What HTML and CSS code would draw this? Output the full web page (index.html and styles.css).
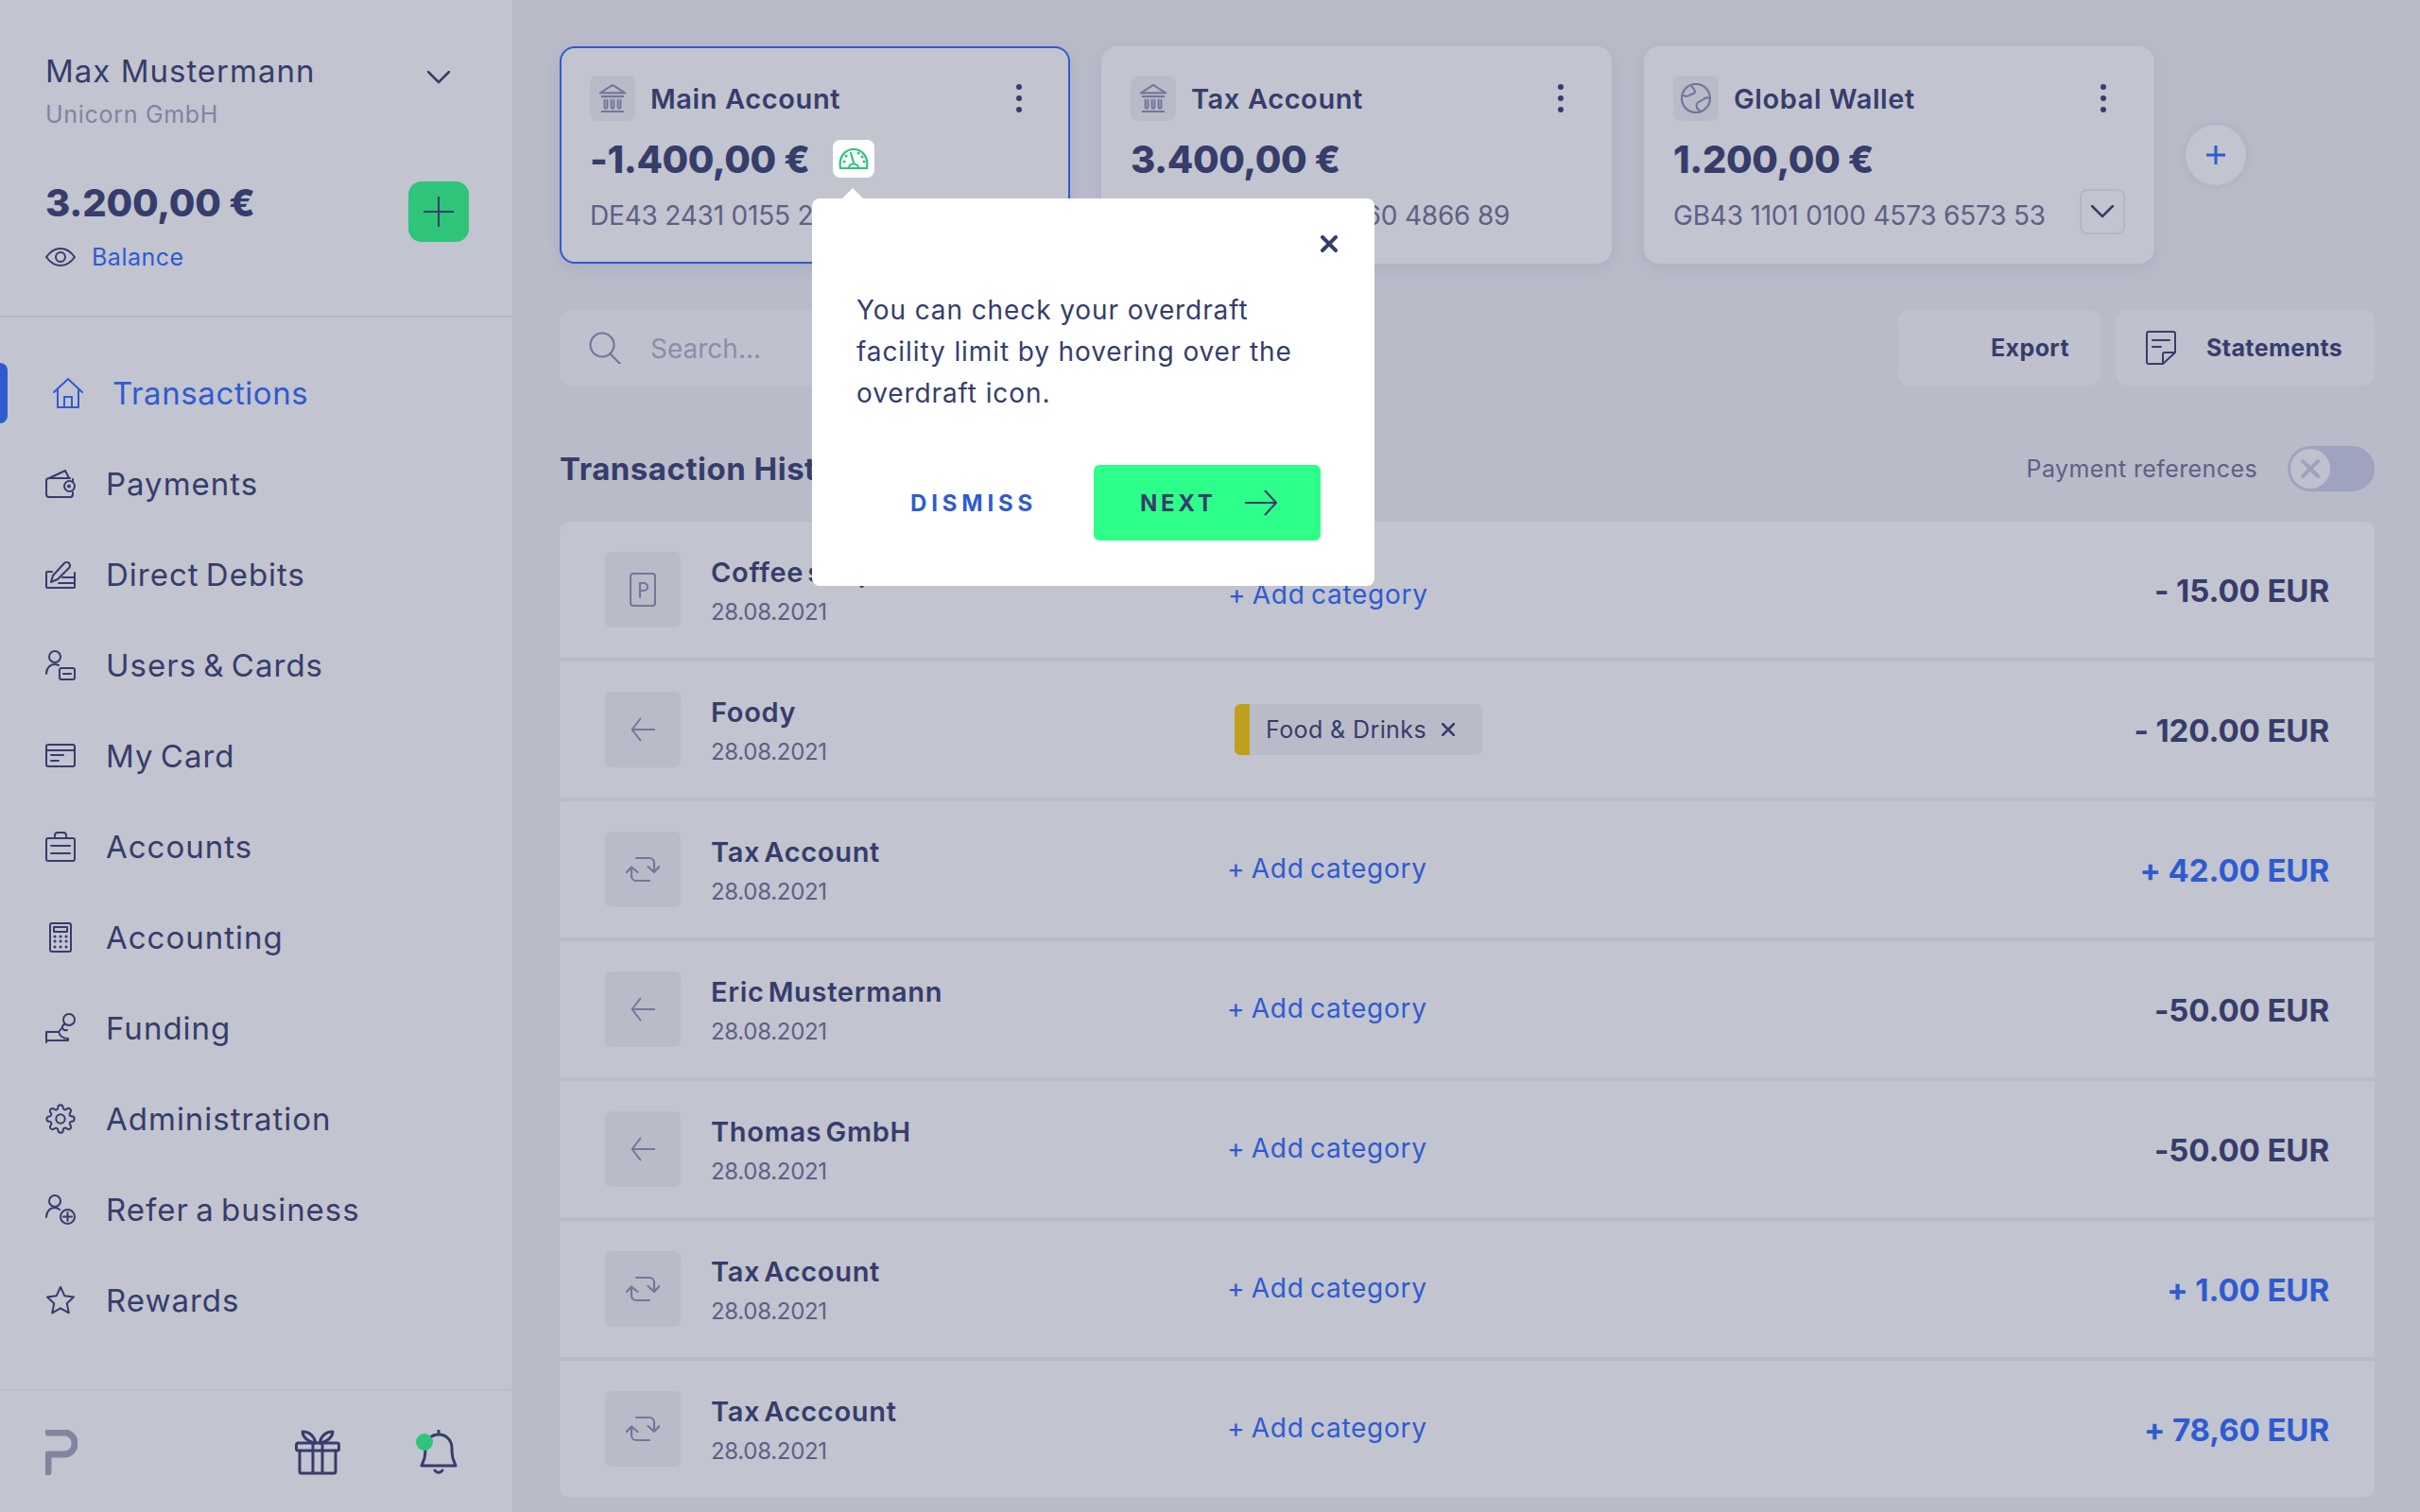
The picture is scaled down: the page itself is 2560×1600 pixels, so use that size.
FILE: index.html
```html
<!DOCTYPE html>
<html lang="en">
<head>
    <meta charset="UTF-8">
    <title>Transactions</title>
    <link rel="stylesheet" href="styles.css">
</head>
<body>
<svg class="sprite" xmlns="http://www.w3.org/2000/svg">
    <symbol id="i-bank" viewBox="0 0 32 32">
        <path d="M2 10 16 1l14 9zM4 14h24M4 31h24" />
        <path d="M7 18v8a1.500 1.500 0 0 0 3 0v-8M14.500 18v8a1.500 1.500 0 0 0 3 0v-8M22 18v8a1.500 1.500 0 0 0 3 0v-8" />
    </symbol>
    <symbol id="i-dots" viewBox="0 0 8 32">
        <circle cx="4" cy="4" r="3" fill="currentColor" stroke="none" />
        <circle cx="4" cy="16" r="3" fill="currentColor" stroke="none" />
        <circle cx="4" cy="28" r="3" fill="currentColor" stroke="none" />
    </symbol>
    <symbol id="i-back" viewBox="0 0 32 32">
        <path d="M30 16H3M13 3 3 16l10 13" />
    </symbol>
    <symbol id="i-swap" viewBox="0 0 36 28">
        <path d="M11 2h14a5 5 0 0 1 5 5v10M23.500 11l6.500 6 5.500-6M25 26H11a5 5 0 0 1-5-5V11.500M.8 17 6 11.500 12.500 17" />
    </symbol>
</svg>

<div class="app">
    <aside class="sidebar">
        <div class="profile">
            <div class="profile-top">
                <div>
                    <div class="user-name">Max Mustermann</div>
                    <div class="company">Unicorn GmbH</div>
                </div>
                <svg class="chevron" viewBox="0 0 24 14" width="24" height="14"><path d="M1 1l11 11L23 1" /></svg>
            </div>
            <div class="profile-balance">
                <div>
                    <div class="balance-amount">3.200,00 €</div>
                    <div class="balance-link">
                        <svg class="line-icon" viewBox="0 0 32 20" width="32" height="20">
                            <path d="M1 10C6 3 11 1 16 1s10 2 15 9c-5 7-10 9-15 9S6 17 1 10z" />
                            <circle cx="16" cy="10" r="5" />
                        </svg>
                        <span>Balance</span>
                    </div>
                </div>
                <div class="add-money">
                    <svg class="line-icon" viewBox="0 0 32 32" width="32" height="32"><path d="M16 0v32M0 16h32" /></svg>
                </div>
            </div>
        </div>

        <nav class="nav">
            <a class="nav-item active">
                <svg class="line-icon" viewBox="0 0 32 32" width="32" height="32">
                    <path d="M1 15 16 1l15 14M5 12v19h22V12M12 31V20h8v11" />
                </svg>
                <span>Transactions</span>
            </a>
            <a class="nav-item">
                <svg class="line-icon" viewBox="0 0 32 32" width="32" height="32">
                    <path d="M29 11V13M29 25v2a3 3 0 0 1-3 3H4a3 3 0 0 1-3-3V13a3 3 0 0 1 3-3h22M4 10 21 2l4 8" />
                    <rect x="20" y="13" width="11" height="11" rx="5.500" />
                    <circle cx="25" cy="18.500" r="1" />
                </svg>
                <span>Payments</span>
            </a>
            <a class="nav-item">
                <svg class="line-icon" viewBox="0 0 32 32" width="32" height="32">
                    <path d="M7 13H2a1 1 0 0 0-1 1v15a1 1 0 0 0 1 1h28a1 1 0 0 0 1-1V14M6 24l2-7L20 4a3 3 0 0 1 5 5L13 21zM18 19h13M14 25h17" />
                </svg>
                <span>Direct Debits</span>
            </a>
            <a class="nav-item">
                <svg class="line-icon" viewBox="0 0 32 32" width="32" height="32">
                    <circle cx="10" cy="7" r="6" />
                    <path d="M1 25c0-6 4-10 9-10 1 0 3 .5 4 1" />
                    <rect x="15" y="19" width="16" height="12" rx="2" />
                    <path d="M19 25h8" />
                </svg>
                <span>Users &amp; Cards</span>
            </a>
            <a class="nav-item">
                <svg class="line-icon" viewBox="0 0 32 32" width="32" height="32">
                    <rect x="1" y="4" width="30" height="23" rx="2" />
                    <path d="M1 10h30M6 15h13M6 21h8" />
                </svg>
                <span>My Card</span>
            </a>
            <a class="nav-item">
                <svg class="line-icon" viewBox="0 0 32 32" width="32" height="32">
                    <rect x="1" y="7" width="30" height="24" rx="2" />
                    <path d="M10 7V4a3 3 0 0 1 3-3h6a3 3 0 0 1 3 3v3M6 15h20M6 23h20" />
                </svg>
                <span>Accounts</span>
            </a>
            <a class="nav-item">
                <svg class="line-icon" viewBox="0 0 32 32" width="32" height="32">
                    <rect x="5" y="1" width="22" height="30" rx="2" />
                    <rect x="9" y="5" width="14" height="5" />
                    <path class="dotted" d="M10 15h.1M16 15h.1M22 15h.1M10 20h.1M16 20h.1M22 20h.1M10 26h.1M16 26h.1M22 26h.1" />
                </svg>
                <span>Accounting</span>
            </a>
            <a class="nav-item">
                <svg class="line-icon" viewBox="0 0 32 32" width="32" height="32">
                    <circle cx="25" cy="7" r="6" />
                    <path d="M1 20v11M1 20h13M1 29h23v-2c-4 0-8-1-10-7M14 20l4-5M21 12a3 3 0 0 0-3 3c0 2 2 4 5 3" />
                </svg>
                <span>Funding</span>
            </a>
            <a class="nav-item">
                <svg class="line-icon" viewBox="0 0 24 24" width="32" height="32">
                    <circle cx="12" cy="12" r="3.500" />
                    <path d="M19.400 15a1.650 1.650 0 0 0 .33 1.820l.06.06a2 2 0 0 1 0 2.830 2 2 0 0 1-2.830 0l-.06-.06a1.650 1.650 0 0 0-1.820-.33 1.650 1.650 0 0 0-1 1.510V21a2 2 0 0 1-2 2 2 2 0 0 1-2-2v-.09A1.650 1.650 0 0 0 9 19.400a1.650 1.650 0 0 0-1.820.33l-.06.06a2 2 0 0 1-2.830 0 2 2 0 0 1 0-2.830l.06-.06a1.650 1.650 0 0 0 .33-1.820 1.650 1.650 0 0 0-1.510-1H3a2 2 0 0 1-2-2 2 2 0 0 1 2-2h.09A1.650 1.650 0 0 0 4.600 9a1.650 1.650 0 0 0-.33-1.820l-.06-.06a2 2 0 0 1 0-2.830 2 2 0 0 1 2.830 0l.06.06a1.650 1.650 0 0 0 1.820.33H9a1.650 1.650 0 0 0 1-1.510V3a2 2 0 0 1 2-2 2 2 0 0 1 2 2v.09a1.650 1.650 0 0 0 1 1.510 1.650 1.650 0 0 0 1.820-.33l.06-.06a2 2 0 0 1 2.830 0 2 2 0 0 1 0 2.830l-.06.06a1.650 1.650 0 0 0-.33 1.820V9a1.650 1.650 0 0 0 1.510 1H21a2 2 0 0 1 2 2 2 2 0 0 1-2 2h-.09a1.650 1.650 0 0 0-1.510 1z" />
                </svg>
                <span>Administration</span>
            </a>
            <a class="nav-item">
                <svg class="line-icon" viewBox="0 0 32 32" width="32" height="32">
                    <circle cx="10" cy="7" r="6" />
                    <path d="M1 24c0-6 4-10 9-10 2 0 4 .8 5 2" />
                    <circle cx="23.500" cy="23.500" r="7.500" />
                    <path d="M23.500 19v9M19 23.500h9" />
                </svg>
                <span>Refer a business</span>
            </a>
            <a class="nav-item">
                <svg class="line-icon" viewBox="0 0 24 24" width="32" height="32">
                    <path d="M12 1.500l3.200 6.900 7.300.9-5.400 5.100 1.500 7.600-6.600-3.800-6.600 3.800 1.500-7.600L1.500 9.300l7.300-.9z" />
                </svg>
                <span>Rewards</span>
            </a>
        </nav>

        <div class="sidebar-footer">
            <svg class="logo" viewBox="0 0 34 48" width="34" height="48">
                <path d="M3 3h17a11 11 0 0 1 11 11v1a11 11 0 0 1-11 11H3v19" />
            </svg>
            <svg class="line-icon thick" viewBox="0 0 48 48" width="48" height="48">
                <rect x="1.500" y="14" width="45" height="8" rx="2" />
                <path d="M5 22v22a2 2 0 0 0 2 2h34a2 2 0 0 0 2-2V22M19 14v32M29 14v32" />
                <path d="M21 14C14 12 8 8 8 2c7 0 12 4 14 12M27 14c7-2 13-6 13-12-7 0-12 4-14 12" />
            </svg>
            <svg class="line-icon thick bell" viewBox="0 0 48 48" width="48" height="48">
                <path d="M24 0v5M6 38h36l-3-8c-1-4-1-7-1-11 0-8-6-14-14-14S10 11 10 19c0 4 0 7-1 11zM20 43c2 3 6 3 8 0" />
                <circle class="bell-dot" cx="9" cy="13" r="9" />
            </svg>
        </div>
    </aside>

    <main class="main">
        <section class="accounts">
            <div class="account-card selected">
                <div class="card-top">
                    <div class="bank-box"><svg class="grey-icon" width="30" height="30"><use href="#i-bank" /></svg></div>
                    <div class="card-name">Main Account</div>
                    <svg class="card-menu" width="8" height="32"><use href="#i-dots" /></svg>
                </div>
                <div class="card-amount-row">
                    <div class="card-amount">-1.400,00 €</div>
                    <div class="overdraft">
                        <svg class="gauge" viewBox="0 0 32 24" width="32" height="24">
                            <path d="M2 22C0 10 7 2 16 2s16 8 14 20zM11 22c0-6 10-6 10 0M16 16 13 6" />
                            <path class="dotted" d="M6 15h.1M8 9h.1M21 6h.1M25 10h.1M27 15h.1" />
                        </svg>
                    </div>
                </div>
                <div class="card-iban-row"><span class="card-iban">DE43 2431 0155 2260 4866 89</span></div>
            </div>
            <div class="account-card">
                <div class="card-top">
                    <div class="bank-box"><svg class="grey-icon" width="30" height="30"><use href="#i-bank" /></svg></div>
                    <div class="card-name">Tax Account</div>
                    <svg class="card-menu" width="8" height="32"><use href="#i-dots" /></svg>
                </div>
                <div class="card-amount-row">
                    <div class="card-amount">3.400,00 €</div>
                </div>
                <div class="card-iban-row"><span class="card-iban">DE43 2431 0155 1260 4866 89</span></div>
            </div>
            <div class="account-card wallet-card">
                <div class="card-top">
                    <div class="bank-box">
                        <svg class="grey-icon" viewBox="0 0 32 32" width="32" height="32">
                            <circle cx="16" cy="16" r="15" />
                            <path d="M11 2c1 3 4 4 4 7s-4 2-6 4-6 0-7 0M21 30c-3-2-5-5-4-8s5-3 7-5 5-2 6-1" />
                        </svg>
                    </div>
                    <div class="card-name">Global Wallet</div>
                    <svg class="card-menu" width="8" height="32"><use href="#i-dots" /></svg>
                </div>
                <div class="card-amount-row">
                    <div class="card-amount">1.200,00 €</div>
                </div>
                <div class="card-iban-row">
                    <span class="card-iban">GB43 1101 0100 4573 6573 53</span>
                    <div class="card-expand">
                        <svg class="chevron" viewBox="0 0 24 14" width="24" height="14"><path d="M1 1l11 11L23 1" /></svg>
                    </div>
                </div>
            </div>
            <div class="add-account">
                <svg viewBox="0 0 20 20" width="20" height="20"><path d="M10 0v20M0 10h20" /></svg>
            </div>
        </section>

        <section class="toolbar">
            <div class="search">
                <svg class="grey-icon" viewBox="0 0 34 34" width="34" height="34">
                    <circle cx="14" cy="14" r="12.500" />
                    <path d="M23 24l10 10" />
                </svg>
                <span>Search...</span>
            </div>
            <div class="tool-btn export-btn">Export</div>
            <div class="tool-btn statements-btn">
                <svg class="line-icon" viewBox="0 0 32 36" width="32" height="36">
                    <path d="M18 35H3a2 2 0 0 1-2-2V3a2 2 0 0 1 2-2h26a2 2 0 0 1 2 2v20L18 35V25a2 2 0 0 1 2-2h11M7 10h18M7 17h9" />
                </svg>
                <span>Statements</span>
            </div>
        </section>

        <section class="history-head">
            <h2>Transaction History</h2>
            <div class="references">
                <span>Payment references</span>
                <div class="toggle">
                    <div class="knob">
                        <svg viewBox="0 0 20 20" width="20" height="20"><path d="M2 2l16 16M18 2 2 18" /></svg>
                    </div>
                </div>
            </div>
        </section>

        <section class="tx-list">
            <div class="tx-row">
                <div class="tx-icon">
                    <svg class="grey-icon" viewBox="0 0 28 36" width="28" height="36">
                        <rect x="1" y="1" width="26" height="34" rx="3" />
                        <path d="M11 26V11h4a4 4 0 0 1 0 8h-4" />
                    </svg>
                </div>
                <div class="tx-info">
                    <div class="tx-name">Coffee shop</div>
                    <div class="tx-date">28.08.2021</div>
                </div>
                <div class="tx-category first-cat"><a class="add-cat">+ Add category</a></div>
                <div class="tx-amount">- 15.00 EUR</div>
            </div>
            <div class="tx-row">
                <div class="tx-icon"><svg class="grey-icon" width="28" height="28"><use href="#i-back" /></svg></div>
                <div class="tx-info">
                    <div class="tx-name">Foody</div>
                    <div class="tx-date">28.08.2021</div>
                </div>
                <div class="tx-category">
                    <div class="tag">
                        <span>Food &amp; Drinks</span>
                        <svg viewBox="0 0 14 14" width="14" height="14"><path d="M1 1l12 12M13 1 1 13" /></svg>
                    </div>
                </div>
                <div class="tx-amount">- 120.00 EUR</div>
            </div>
            <div class="tx-row">
                <div class="tx-icon"><svg class="grey-icon" width="36" height="28"><use href="#i-swap" /></svg></div>
                <div class="tx-info">
                    <div class="tx-name">Tax Account</div>
                    <div class="tx-date">28.08.2021</div>
                </div>
                <div class="tx-category"><a class="add-cat">+ Add category</a></div>
                <div class="tx-amount plus">+ 42.00 EUR</div>
            </div>
            <div class="tx-row">
                <div class="tx-icon"><svg class="grey-icon" width="28" height="28"><use href="#i-back" /></svg></div>
                <div class="tx-info">
                    <div class="tx-name">Eric Mustermann</div>
                    <div class="tx-date">28.08.2021</div>
                </div>
                <div class="tx-category"><a class="add-cat">+ Add category</a></div>
                <div class="tx-amount">-50.00 EUR</div>
            </div>
            <div class="tx-row">
                <div class="tx-icon"><svg class="grey-icon" width="28" height="28"><use href="#i-back" /></svg></div>
                <div class="tx-info">
                    <div class="tx-name">Thomas GmbH</div>
                    <div class="tx-date">28.08.2021</div>
                </div>
                <div class="tx-category"><a class="add-cat">+ Add category</a></div>
                <div class="tx-amount">-50.00 EUR</div>
            </div>
            <div class="tx-row">
                <div class="tx-icon"><svg class="grey-icon" width="36" height="28"><use href="#i-swap" /></svg></div>
                <div class="tx-info">
                    <div class="tx-name">Tax Account</div>
                    <div class="tx-date">28.08.2021</div>
                </div>
                <div class="tx-category"><a class="add-cat">+ Add category</a></div>
                <div class="tx-amount plus">+ 1.00 EUR</div>
            </div>
            <div class="tx-row">
                <div class="tx-icon"><svg class="grey-icon" width="36" height="28"><use href="#i-swap" /></svg></div>
                <div class="tx-info">
                    <div class="tx-name">Tax Acccount</div>
                    <div class="tx-date">28.08.2021</div>
                </div>
                <div class="tx-category"><a class="add-cat">+ Add category</a></div>
                <div class="tx-amount plus">+ 78,60 EUR</div>
            </div>
        </section>
    </main>
</div>

<!-- onboarding tooltip, sits over the page -->
<div class="tour-popup">
    <svg class="tour-close" viewBox="0 0 18 18" width="18" height="18"><path d="M2 2l14 14M16 2 2 16" /></svg>
    <p>You can check your overdraft<br>facility limit by hovering over the<br>overdraft icon.</p>
    <div class="tour-actions">
        <a class="tour-dismiss">DISMISS</a>
        <a class="tour-next">
            <span>NEXT</span>
            <svg viewBox="0 0 34 28" width="34" height="28"><path d="M0 14h32M21 1l12 13-12 13" /></svg>
        </a>
    </div>
</div>
</body>
</html>
```

FILE: styles.css
```css
* {
    box-sizing: border-box;
    margin: 0;
    padding: 0;
}

body {
    font-family: 'Inter', 'Noto Sans', sans-serif;
    color: #363d6b;
    width: 2560px;
    height: 1600px;
    overflow: hidden;
    background-color: #b9bbc9;
}

.sprite {
    display: none;
}

svg {
    display: block;
    flex-shrink: 0;
    fill: none;
}

.line-icon {
    stroke: #363d6b;
    stroke-width: 2;
    stroke-linejoin: round;
    stroke-linecap: round;
}

.nav-item .line-icon[viewBox="0 0 24 24"] {
    stroke-width: 1.5;
}

.line-icon.thick {
    stroke-width: 3;
}

.grey-icon {
    stroke: #73789a;
    stroke-width: 2.2;
    stroke-linejoin: round;
    stroke-linecap: round;
}

.dotted {
    stroke-width: 3;
}

.chevron {
    stroke: #363d6b;
    stroke-width: 2.5;
    stroke-linecap: round;
    stroke-linejoin: round;
}

.app {
    display: flex;
    height: 1600px;
}

/* sidebar */
.sidebar {
    width: 543px;
    height: 1600px;
    background-color: #c2c4d0;
    border-right: 1px solid #b7b9c8;
    display: flex;
    flex-direction: column;
    flex-shrink: 0;
}

.profile {
    height: 336px;
    padding: 55px 46px 0 48px;
    border-bottom: 2px solid #b5b7c7;
}

.profile-top {
    display: flex;
    justify-content: space-between;
    align-items: flex-start;
    padding-right: 20px;
}

.profile-top .chevron {
    margin-top: 20px;
}

.user-name {
    font-size: 33px;
    line-height: 40px;
    font-weight: 400;
    letter-spacing: 1px;
}

.company {
    font-size: 25px;
    line-height: 30px;
    margin-top: 11px;
    color: #7f84a3;
    letter-spacing: 0.7px;
}

.profile-balance {
    display: flex;
    justify-content: space-between;
    align-items: flex-start;
    margin-top: 54px;
}

.balance-amount {
    font-size: 40px;
    line-height: 48px;
    font-weight: 800;
    padding-top: 1px;
    letter-spacing: -0.2px;
}

.balance-link {
    display: flex;
    align-items: center;
    gap: 17px;
    margin-top: 20px;
    font-size: 25px;
    line-height: 26px;
    color: #2f5bd0;
    letter-spacing: 0.5px;
}

.add-money {
    width: 64px;
    height: 64px;
    margin-top: 2px;
    background-color: #2ec47a;
    border-radius: 14px;
    display: flex;
    justify-content: center;
    align-items: center;
}

.nav {
    padding-top: 32px;
}

.nav-item {
    position: relative;
    height: 96px;
    padding-left: 48px;
    display: flex;
    align-items: center;
    gap: 32px;
    font-size: 33px;
    letter-spacing: 1px;
    word-spacing: -3px;
}

.nav-item.active {
    padding-left: 56px;
    gap: 31px;
    color: #2f5bd0;
    letter-spacing: 0.6px;
}

.nav-item.active .line-icon {
    stroke: #2f5bd0;
}

.nav-item.active::before {
    content: "";
    position: absolute;
    left: 0;
    top: 16px;
    width: 8px;
    height: 64px;
    background-color: #2f5bd0;
    border-radius: 0 8px 8px 0;
}

.sidebar-footer {
    margin-top: auto;
    height: 130px;
    padding: 41px 54px 0 48px;
    border-top: 2px solid #b9bbca;
    display: flex;
    align-items: flex-start;
    gap: 80px;
}

.logo {
    margin-right: auto;
    stroke: #81869f;
    stroke-width: 7;
    stroke-linecap: round;
    stroke-linejoin: round;
}

.bell-dot {
    fill: #2ec47a;
    stroke: none;
}

/* main column */
.main {
    flex: 1;
    padding: 49px 48px 0 49px;
}

.accounts {
    display: flex;
    align-items: center;
    gap: 33px;
}

.account-card {
    width: 540px;
    height: 230px;
    padding: 29px 29px 0;
    background-color: #c2c4d0;
    border: 2px solid #c2c4d0;
    border-radius: 16px;
    box-shadow: 0 4px 14px rgba(130, 133, 160, 0.25);
}

.account-card.selected {
    border-color: #2f5bd0;
    padding-left: 30px;
}

.wallet-card {
    margin-left: 1px;
}

.card-top {
    display: flex;
    align-items: center;
    gap: 16px;
    height: 48px;
}

.bank-box {
    width: 48px;
    height: 48px;
    background-color: #b9bbc9;
    border-radius: 8px;
    display: flex;
    justify-content: center;
    align-items: center;
}

.card-name {
    font-size: 29px;
    font-weight: 600;
    letter-spacing: 0.6px;
}

.card-menu {
    margin-left: auto;
    margin-right: 19px;
    color: #363d6b;
    fill: currentColor;
}

.card-amount-row {
    display: flex;
    align-items: center;
    gap: 24px;
    height: 48px;
    margin-top: 16px;
}

.card-amount {
    font-size: 40px;
    font-weight: 800;
    letter-spacing: -0.4px;
}

.overdraft {
    width: 44px;
    height: 40px;
    background-color: #fff;
    border-radius: 8px;
    display: flex;
    justify-content: center;
    align-items: center;
}

.gauge {
    stroke: #2ec47a;
    stroke-width: 2.2;
    stroke-linejoin: round;
    stroke-linecap: round;
}

.card-iban-row {
    display: flex;
    justify-content: space-between;
    align-items: center;
    height: 48px;
    margin-top: 8px;
}

.card-iban {
    font-size: 28px;
    color: #5c6186;
    margin-top: 8px;
    letter-spacing: -0.2px;
}

.card-expand {
    width: 48px;
    height: 48px;
    border: 2px solid #b5b7c8;
    border-radius: 8px;
    display: flex;
    justify-content: center;
    align-items: center;
}

.add-account {
    width: 64px;
    height: 64px;
    background-color: #c2c4d0;
    border-radius: 50%;
    box-shadow: 0 0 10px rgba(130, 133, 160, 0.25);
    display: flex;
    justify-content: center;
    align-items: center;
}

.add-account svg {
    stroke: #2f5bd0;
    stroke-width: 3;
}

.toolbar {
    display: flex;
    gap: 16px;
    margin-top: 49px;
}

.search {
    width: 600px;
    height: 80px;
    margin-right: auto;
    padding-left: 31px;
    background-color: #bfc1ce;
    border-radius: 12px;
    display: flex;
    align-items: center;
    gap: 31px;
    font-size: 28px;
    color: #8a8ea8;
}

.search span {
    margin-top: 2px;
}

.tool-btn {
    height: 80px;
    background-color: #bfc1ce;
    border-radius: 12px;
    display: flex;
    align-items: center;
    font-size: 25px;
    font-weight: 700;
    letter-spacing: 0.4px;
}

.export-btn {
    width: 214px;
    justify-content: flex-end;
    padding-right: 33px;
}

.statements-btn {
    width: 274px;
    padding-left: 32px;
    gap: 32px;
}

.history-head {
    display: flex;
    justify-content: space-between;
    align-items: center;
    height: 48px;
    margin-top: 64px;
}

.history-head h2 {
    font-size: 33px;
    font-weight: 700;
    letter-spacing: 0.5px;
}

.references {
    display: flex;
    align-items: center;
    gap: 32px;
    font-size: 25px;
    color: #5c6186;
    letter-spacing: 0.4px;
}

.toggle {
    width: 92px;
    height: 48px;
    background-color: #a0a3bf;
    border-radius: 24px;
    padding: 3px;
}

.knob {
    width: 42px;
    height: 42px;
    background-color: #bfc1ce;
    border-radius: 50%;
    display: flex;
    justify-content: center;
    align-items: center;
}

.knob svg {
    stroke: #a0a3bf;
    stroke-width: 4;
    stroke-linecap: round;
}

.tx-list {
    display: flex;
    flex-direction: column;
    gap: 4px;
    margin-top: 32px;
}

.tx-row {
    height: 144px;
    padding: 0 48px 0 48px;
    background-color: #c2c4d0;
    display: flex;
    align-items: center;
}

.tx-row:first-child {
    border-radius: 10px 10px 0 0;
}

.tx-row:last-child {
    border-radius: 0 0 10px 10px;
}

.tx-icon {
    width: 80px;
    height: 80px;
    background-color: #b9bbc9;
    border-radius: 6px;
    display: flex;
    justify-content: center;
    align-items: center;
    flex-shrink: 0;
}

.tx-info {
    width: 546px;
    margin-left: 32px;
    padding-top: 3px;
    flex-shrink: 0;
}

.tx-name {
    font-size: 29px;
    line-height: 36px;
    font-weight: 600;
    letter-spacing: 0.7px;
    word-spacing: -4px;
}

.tx-date {
    font-size: 24px;
    line-height: 32px;
    margin-top: 8px;
    color: #5c6186;
    letter-spacing: -0.3px;
}

.tx-category {
    flex: 1;
    margin-top: -3px;
}

.tx-category.first-cat {
    margin-top: 9px;
    padding-left: 1px;
}

.add-cat {
    font-size: 28px;
    color: #2f5bd0;
    letter-spacing: 0.7px;
    word-spacing: -2px;
}

.tag {
    display: inline-flex;
    align-items: center;
    gap: 16px;
    height: 54px;
    width: 262px;
    margin-left: 8px;
    margin-top: 3px;
    padding-left: 33px;
    background-color: #b9bbc9;
    border-left: 16px solid #c09f1f;
    border-radius: 6px;
    font-size: 25px;
    letter-spacing: 0.4px;
}

.tag span {
    margin-left: -16px;
}

.tag svg {
    stroke: #363d6b;
    stroke-width: 2.5;
    stroke-linecap: round;
}

.tx-amount {
    font-size: 33px;
    font-weight: 700;
    padding-top: 1px;
    letter-spacing: -0.1px;
}

.tx-amount.plus {
    color: #2f5bd0;
}

/* tooltip */
.tour-popup {
    position: absolute;
    left: 859px;
    top: 210px;
    width: 595px;
    height: 410px;
    padding: 96px 57px 0 47px;
    background-color: #fff;
    border-radius: 8px;
}

.tour-popup::before {
    content: "";
    position: absolute;
    left: 32px;
    top: -11px;
    border-left: 11px solid transparent;
    border-right: 11px solid transparent;
    border-bottom: 11px solid #fff;
}

.tour-close {
    position: absolute;
    right: 39px;
    top: 39px;
    stroke: #363d6b;
    stroke-width: 4;
    stroke-linecap: round;
}

.tour-popup p {
    font-size: 28px;
    line-height: 44px;
    color: #363d6b;
    letter-spacing: 0.9px;
}

.tour-actions {
    display: flex;
    justify-content: flex-end;
    align-items: center;
    gap: 60px;
    margin-top: 54px;
}

.tour-dismiss {
    font-size: 24px;
    font-weight: 700;
    letter-spacing: 4.8px;
    color: #2f5bd0;
}

.tour-next {
    width: 240px;
    height: 80px;
    padding-left: 49px;
    background-color: #2eff8a;
    border-radius: 6px;
    display: flex;
    align-items: center;
    gap: 31px;
    font-size: 24px;
    font-weight: 700;
    letter-spacing: 3.7px;
}

.tour-next svg {
    stroke: #363d6b;
    stroke-width: 2;
}
```
